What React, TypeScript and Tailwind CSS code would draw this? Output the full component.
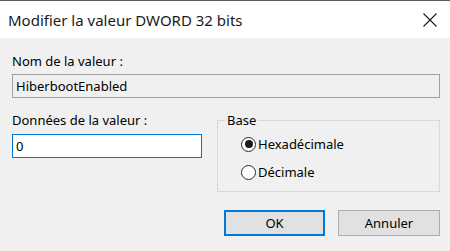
import { useState } from 'react';

function CloseIcon() {
    return (
        <svg width="14" height="14" viewBox="0 0 14 14" className="text-[#1a1a1a]">
            <path d="M0.5 0.5 L13.5 13.5 M13.5 0.5 L0.5 13.5" stroke="currentColor" strokeWidth="1.1" fill="none" />
        </svg>
    );
}

function Radio({ checked, label, onSelect }: { checked: boolean; label: string; onSelect: () => void }) {
    return (
        <label className="flex items-center gap-[2px] h-[16px] cursor-default" onClick={onSelect}>
            <span className="w-[15px] h-[15px] rounded-full border-[1.5px] border-[#2b2b2b] bg-white flex items-center justify-center">
                {checked && <span className="w-[8px] h-[8px] rounded-full bg-[#1a1a1a]" />}
            </span>
            <span>{label}</span>
        </label>
    );
}

export default function App() {
    const [value, setValue] = useState('0');
    const [base, setBase] = useState<'hex' | 'dec'>('hex');

    return (
        <div
            className="w-[450px] h-[251px] bg-[#f0f0f0] border-t border-[#5c5c5c] flex flex-col text-[13px] leading-[16px] text-black overflow-hidden"
            style={{ fontFamily: '"Noto Sans", "Open Sans", sans-serif' }}
        >
            {/* Title bar */}
            <div className="h-[37px] bg-white flex items-center justify-between pl-[8px] pr-[13px] shrink-0">
                <span className="text-[15px] leading-[20px] text-[#1a1a1a]">Modifier la valeur DWORD 32 bits</span>
                <CloseIcon />
            </div>

            <div className="flex flex-col pl-[12px] pr-[10px] pt-[15px]">
                {/* Value name */}
                <div className="h-[16px]">Nom de la valeur :</div>
                <div className="mt-[5px] h-[24px] border border-[#a0a0a0] bg-[#f0f0f0] flex items-center px-[3px]">
                    HiberbootEnabled
                </div>

                <div className="flex mt-[14px]">
                    {/* Value data */}
                    <div className="flex flex-col w-[190px]">
                        <div className="h-[16px]">Données de la valeur :</div>
                        <input
                            value={value}
                            onChange={(e) => setValue(e.target.value)}
                            className="mt-[6px] h-[24px] border border-[#0078d7] bg-white px-[3px] outline-none"
                        />
                    </div>

                    {/* Base */}
                    <fieldset className="ml-[15px] flex-1 h-[80px] border border-[#d9d9d9] p-0 min-w-0">
                        <legend className="ml-[7px] px-[2px] leading-[16px]">Base</legend>
                        <div className="flex flex-col gap-[12px] mt-[8px] pl-[23px]">
                            <Radio checked={base === 'hex'} label="Hexadécimale" onSelect={() => setBase('hex')} />
                            <Radio checked={base === 'dec'} label="Décimale" onSelect={() => setBase('dec')} />
                        </div>
                    </fieldset>
                </div>

                {/* Buttons */}
                <div className="flex justify-end gap-[13px] mt-[18px]">
                    <button className="w-[101px] h-[26px] bg-[#e1e1e1] border-2 border-[#0078d7]">OK</button>
                    <button className="w-[102px] h-[26px] bg-[#e1e1e1] border border-[#adadad]">Annuler</button>
                </div>
            </div>
        </div>
    );
}
